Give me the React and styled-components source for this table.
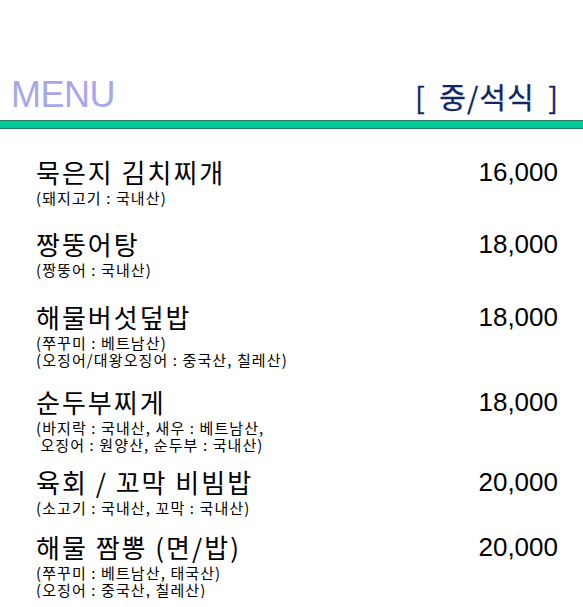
import React from 'react';
import styled, { createGlobalStyle } from 'styled-components';

const GlobalStyle = createGlobalStyle`
  body {
    margin: 0;
    background: #ffffff;
    font-family: "Noto Sans CJK KR", "Liberation Sans", sans-serif;
  }
`;

const items = [
  { name: '묵은지 김치찌개', price: '16,000', notes: ['(돼지고기 : 국내산)'], space: 0 },
  { name: '짱뚱어탕', price: '18,000', notes: ['(짱뚱어 : 국내산)'], space: 23 },
  { name: '해물버섯덮밥', price: '18,000', notes: ['(쭈꾸미 : 베트남산)', '(오징어/대왕오징어 : 중국산, 칠레산)'], space: 24 },
  { name: '순두부찌게', price: '18,000', notes: ['(바지락 : 국내산, 새우 : 베트남산,', '\u00a0오징어 : 원양산, 순두부 : 국내산)'], space: 19 },
  { name: '육회 / 꼬막 비빔밥', price: '20,000', notes: ['(소고기 : 국내산, 꼬막 : 국내산)'], space: 14 },
  { name: '해물 짬뽕 (면/밥)', price: '20,000', notes: ['(쭈꾸미 : 베트남산, 태국산)', '(오징어 : 중국산, 칠레산)'], space: 16 },
];

export default function App() {
  return (
    <Page>
      <GlobalStyle />
      <Header>
        <Title>MENU</Title>
        <Category>[ 중/석식 ]</Category>
      </Header>
      <Bar />
      <List>
        {items.map((item) => (
          <Item key={item.name} space={item.space}>
            <NameRow>
              <Name>{item.name}</Name>
              <Price>{item.price}</Price>
            </NameRow>
            {item.notes.map((note) => (
              <Note key={note}>{note}</Note>
            ))}
          </Item>
        ))}
      </List>
    </Page>
  );
}

// STYLED COMPONENTS
const Page = styled.div`
  width: 583px;
`;

const Header = styled.div`
  display: flex;
  justify-content: space-between;
  align-items: flex-end;
  padding: 75px 24px 5px 11px;
`;

const Title = styled.h1`
  margin: 0;
  font-family: "Liberation Sans", Arial, sans-serif;
  font-weight: normal;
  font-size: 36px;
  line-height: 40px;
  letter-spacing: -0.5px;
  color: #a8a8e8;
`;

const Category = styled.div`
  font-family: "Noto Sans CJK KR", "Liberation Sans", sans-serif;
  font-size: 29px;
  line-height: 38px;
  letter-spacing: 1px;
  color: #0f2766;
  white-space: pre;
  word-spacing: 6px;
  -webkit-text-stroke: 0.3px #0f2766;
`;

const Bar = styled.div`
  height: 7px;
  background: #00cc99;
  border-top: 1px solid #2b7a66;
  border-bottom: 1px solid #2b7a66;
`;

const List = styled.div`
  padding: 28px 25px 0 36px;
`;

const Item = styled.div`
  margin-top: ${(p) => p.space}px;
`;

const NameRow = styled.div`
  display: flex;
  justify-content: space-between;
  align-items: center;
  height: 30px;
  margin-bottom: 2px;
`;

const Name = styled.span`
  font-size: 26px;
  line-height: 30px;
  letter-spacing: 2px;
  color: #000000;
`;

const Price = styled.span`
  font-family: "Liberation Sans", Arial, sans-serif;
  font-size: 26px;
  line-height: 30px;
  color: #000000;
`;

const Note = styled.div`
  font-size: 15px;
  line-height: 17px;
  letter-spacing: 1.1px;
  color: #000000;
  white-space: pre;
`;
